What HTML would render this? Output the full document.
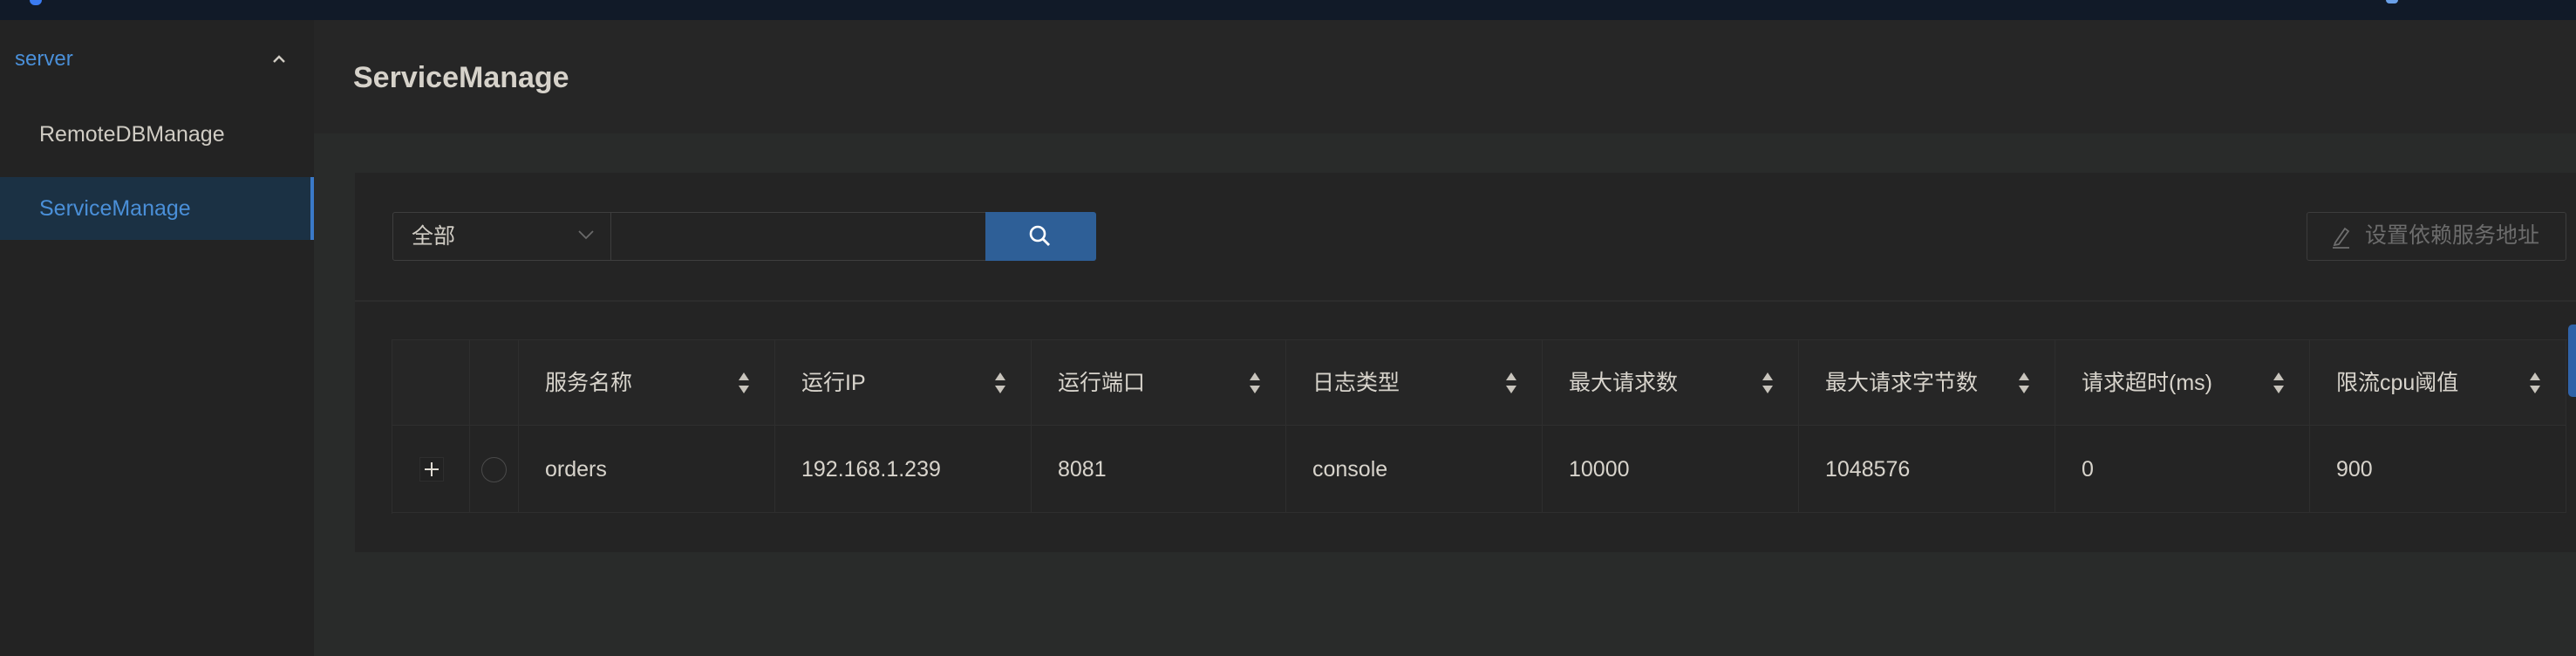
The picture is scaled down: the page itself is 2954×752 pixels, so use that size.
<!DOCTYPE html>
<html><head><meta charset="utf-8"><style>
*{margin:0;padding:0;box-sizing:border-box}
body{width:2954px;height:752px;overflow:hidden;background:#262626;font-family:"Liberation Sans","Noto Sans CJK SC",sans-serif;color:#d0ccc4;position:relative}
.abs{position:absolute}
.top{left:0;top:0;width:2954px;height:23px;background:#111a28}
.side{left:0;top:23px;width:360px;height:729px;background:#232323}
.content{left:360px;top:153px;width:2594px;height:599px;background:#292b2a}
.card{left:407px;top:198px;width:2547px;height:435px;background:#242424}
.t{white-space:nowrap}
.th,.td{position:absolute;border-right:1px solid #2e2e2e;border-bottom:1px solid #2e2e2e;font-size:25px;color:#d8d4cc}
.th{top:390px;height:98px;background:#262626;line-height:98px}
.td{top:488px;height:100px;background:#242424;line-height:100px}
.sort{position:absolute;right:28px;top:36px;width:14px;height:26px}
</style></head><body>
<div class="abs top"></div>
<div class="abs" style="left:34px;top:0;width:14px;height:6px;background:#3b7bf0;border-radius:0 0 7px 7px"></div>
<div class="abs" style="left:2736px;top:0;width:14px;height:4px;background:#6aa0e8;border-radius:0 0 7px 7px"></div>
<div class="abs side"></div>
<div class="abs t" style="left:17px;top:52px;font-size:24px;color:#4a8fd8;line-height:32px">server</div>
<svg class="abs" style="left:312px;top:62px" width="16" height="12"><path d="M2 9 L8 3 L14 9" stroke="#d0ccc4" stroke-width="2.4" fill="none"/></svg>
<div class="abs t" style="left:45px;top:138px;font-size:25px;line-height:32px;color:#d0ccc4">RemoteDBManage</div>
<div class="abs" style="left:0;top:203px;width:360px;height:72px;background:#1b3144;border-right:4px solid #3a79c8"></div>
<div class="abs t" style="left:45px;top:223px;font-size:25px;line-height:32px;color:#4a8fd8">ServiceManage</div>
<div class="abs t" style="left:405px;top:68px;font-size:34px;line-height:42px;color:#d6d2ca;font-weight:bold">ServiceManage</div>
<div class="abs content"></div>
<div class="abs card"></div>
<div class="abs" style="left:450px;top:243px;width:252px;height:56px;border:1.5px solid #3e3e3e;border-radius:3px 0 0 3px;background:#242424"></div>
<div class="abs t" style="left:472px;top:255px;font-size:25px;line-height:32px">全部</div>
<svg class="abs" style="left:662px;top:262px" width="20" height="14"><path d="M2 3 L10 11 L18 3" stroke="#6a6a6a" stroke-width="1.8" fill="none"/></svg>
<div class="abs" style="left:700px;top:243px;width:431px;height:56px;border:1.5px solid #3e3e3e;background:#242424"></div>
<div class="abs" style="left:1130px;top:243px;width:127px;height:56px;background:#2e5f97;border-radius:0 3px 3px 0"></div>
<svg class="abs" style="left:1178px;top:256px" width="30" height="30"><circle cx="12" cy="12" r="8" stroke="#fff" stroke-width="2.6" fill="none"/><path d="M18 18 L25 25" stroke="#fff" stroke-width="2.8"/></svg>
<div class="abs" style="left:2645px;top:243px;width:298px;height:56px;border:1.5px solid #3c3c3c;border-radius:3px"></div>
<svg class="abs" style="left:2672px;top:258px" width="26" height="28"><path d="M6 20 L17 4 L21 7 L10 22 L5 23 Z" stroke="#6e6e6e" stroke-width="1.8" fill="none"/><path d="M3 26 H22" stroke="#6e6e6e" stroke-width="1.8"/></svg>
<div class="abs t" style="left:2712px;top:254px;font-size:25px;line-height:32px;color:#6c6c6c">设置依赖服务地址</div>
<div class="abs" style="left:407px;top:344px;width:2547px;height:2px;background:#2c2c2c"></div>
<div class="abs" style="left:450px;top:389px;width:2494px;height:1px;background:#2e2e2e"></div>
<div class="abs" style="left:449px;top:389px;width:1px;height:200px;background:#2e2e2e"></div>
<div class="th" style="left:450px;width:89px"></div>
<div class="th" style="left:539px;width:56px"></div>
<div class="th" style="left:595px;width:294px;padding-left:30px">服务名称<svg class="sort"><path d="M7 1 L13 10 H1Z M7 25 L13 16 H1Z" fill="#c8c4bc"/></svg></div>
<div class="th" style="left:889px;width:294px;padding-left:30px">运行IP<svg class="sort"><path d="M7 1 L13 10 H1Z M7 25 L13 16 H1Z" fill="#c8c4bc"/></svg></div>
<div class="th" style="left:1183px;width:292px;padding-left:30px">运行端口<svg class="sort"><path d="M7 1 L13 10 H1Z M7 25 L13 16 H1Z" fill="#c8c4bc"/></svg></div>
<div class="th" style="left:1475px;width:294px;padding-left:30px">日志类型<svg class="sort"><path d="M7 1 L13 10 H1Z M7 25 L13 16 H1Z" fill="#c8c4bc"/></svg></div>
<div class="th" style="left:1769px;width:294px;padding-left:30px">最大请求数<svg class="sort"><path d="M7 1 L13 10 H1Z M7 25 L13 16 H1Z" fill="#c8c4bc"/></svg></div>
<div class="th" style="left:2063px;width:294px;padding-left:30px">最大请求字节数<svg class="sort"><path d="M7 1 L13 10 H1Z M7 25 L13 16 H1Z" fill="#c8c4bc"/></svg></div>
<div class="th" style="left:2357px;width:292px;padding-left:30px">请求超时(ms)<svg class="sort"><path d="M7 1 L13 10 H1Z M7 25 L13 16 H1Z" fill="#c8c4bc"/></svg></div>
<div class="th" style="left:2649px;width:294px;padding-left:30px">限流cpu阈值<svg class="sort"><path d="M7 1 L13 10 H1Z M7 25 L13 16 H1Z" fill="#c8c4bc"/></svg></div>
<div class="td" style="left:450px;width:89px"><div class="abs" style="left:31px;top:36px;width:28px;height:28px;border:1px solid #2e2e2e;background:#222"></div><svg class="abs" style="left:36px;top:41px" width="18" height="18"><path d="M9 1 V17 M1 9 H17" stroke="#e0dcd4" stroke-width="2"/></svg></div>
<div class="td" style="left:539px;width:56px"><div class="abs" style="left:13px;top:36px;width:29px;height:29px;border:1.5px solid #4a4a4a;border-radius:50%"></div></div>
<div class="td" style="left:595px;width:294px;padding-left:30px">orders</div>
<div class="td" style="left:889px;width:294px;padding-left:30px">192.168.1.239</div>
<div class="td" style="left:1183px;width:292px;padding-left:30px">8081</div>
<div class="td" style="left:1475px;width:294px;padding-left:30px">console</div>
<div class="td" style="left:1769px;width:294px;padding-left:30px">10000</div>
<div class="td" style="left:2063px;width:294px;padding-left:30px">1048576</div>
<div class="td" style="left:2357px;width:292px;padding-left:30px">0</div>
<div class="td" style="left:2649px;width:294px;padding-left:30px">900</div>
<div class="abs" style="left:2945px;top:372px;width:9px;height:83px;background:#2f62a8;border-radius:5px 0 0 5px"></div>
</body></html>
